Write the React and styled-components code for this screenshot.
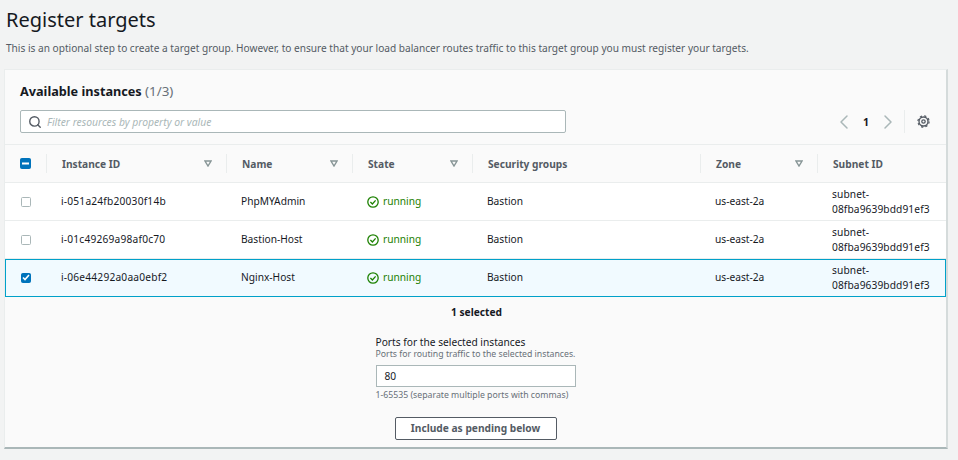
import React from "react";
import styled, { createGlobalStyle } from "styled-components";
import { Search, ChevronLeft, ChevronRight } from "lucide-react";

const GlobalStyle = createGlobalStyle`
  html, body {
    margin: 0;
    height: 460px;
    overflow: hidden;
    background: #f2f3f3;
    font-family: "Noto Sans", "Open Sans", sans-serif;
    color: #16191f;
  }
  * { box-sizing: border-box; }
`;

const COLUMNS = "41px 180px 126px 120px 228px 117px 1fr";

const Page = styled.div`
  width: 958px;
  height: 460px;
  padding: 6px 10px 0 4px;
`;

const Title = styled.h1`
  margin: 0 0 0 2px;
  font-size: 20px;
  line-height: 28px;
  font-weight: 400;
`;

const Intro = styled.p`
  margin: 7px 0 0 2px;
  font-size: 10.12px;
  line-height: 14px;
  color: #545b64;
  white-space: nowrap;
`;

const Card = styled.section`
  margin-top: 14px;
  height: 380px;
  background: #fafafa;
  border: 1px solid #eaeded;
  border-right: 2px solid #d5dbdb;
  border-bottom: 2px solid #aab7b8;
  display: flex;
  flex-direction: column;
`;

const CardHead = styled.div`
  height: 75px;
  padding: 11px 15px 0 15px;
  border-bottom: 1px solid #eaeded;
`;

const CardTitle = styled.h2`
  margin: 0;
  font-size: 12.7px;
  line-height: 20px;
  font-weight: 700;
  span {
    font-weight: 400;
    font-size: 13.4px;
    color: #687078;
  }
`;

const Toolbar = styled.div`
  margin-top: 9px;
  display: flex;
  align-items: center;
  justify-content: space-between;
`;

const FilterBox = styled.div`
  width: 546px;
  height: 23px;
  background: #fff;
  border: 1px solid #aab7b8;
  border-radius: 2px;
  display: flex;
  align-items: center;
  gap: 5px;
  padding-left: 7px;
  font-size: 10.35px;
  i {
    color: #aab7b8;
  }
`;

const Pager = styled.div`
  display: flex;
  align-items: center;
  height: 23px;
  margin-right: 1px;
  color: #aab7b8;
`;

const PageNumber = styled.span`
  width: 20px;
  text-align: center;
  color: #16191f;
  font-size: 10.5px;
  font-weight: 700;
`;

const PagerDivider = styled.span`
  width: 1px;
  height: 23px;
  background: #eaeded;
  margin: 0 12px 0 4px;
`;

const TableRow = styled.div`
  display: grid;
  grid-template-columns: ${COLUMNS};
  height: 38px;
  align-items: center;
  background: ${(p) => (p.$selected ? "#f1faff" : "#fff")};
  border-bottom: 1px solid #eaeded;
  font-size: 10.2px;
  color: #16191f;
  ${(p) => p.$selected && `
    border-bottom: none;
    padding-bottom: 1px;
    box-shadow: inset 0 0 0 1px #00a1c9;
  `}
`;

const HeadRow = styled(TableRow)`
  background: #fafafa;
  font-weight: 700;
  color: #545b64;
`;

const HeadCell = styled.div`
  height: 19px;
  display: flex;
  align-items: center;
  justify-content: space-between;
  padding: 0 14px 0 15px;
  border-left: 1px solid #eaeded;
`;

const Cell = styled.div`
  padding-left: 15px;
  line-height: 15px;
  letter-spacing: ${(p) => p.$spacing || 0}px;
`;

const BoxCell = styled.div`
  display: flex;
  padding-left: ${(p) => (p.$head ? 15 : 16)}px;
`;

const Check = styled.span`
  width: ${(p) => (p.$head ? 11 : 10)}px;
  height: ${(p) => (p.$head ? 11 : 10)}px;
  border-radius: 1.5px;
  display: flex;
  align-items: center;
  justify-content: center;
  background: ${(p) => (p.$on ? "#0073bb" : "#fff")};
  border: 1px solid ${(p) => (p.$on ? "#0073bb" : "#aab7b8")};
`;

const Status = styled.div`
  display: flex;
  align-items: center;
  gap: 4px;
  padding-left: 15px;
  color: #1d8102;
`;

const StatusText = styled.span`
  margin-top: -2px;
`;

const Selected = styled.div`
  margin: 8px 0 0 2px;
  text-align: center;
  font-size: 10.2px;
  line-height: 14px;
  font-weight: 700;
`;

const PortForm = styled.div`
  width: 200px;
  margin: 16px auto 0 auto;
`;

const PortLabel = styled.div`
  font-size: 10.2px;
  line-height: 14px;
  color: #16191f;
`;

const PortHint = styled.div`
  font-size: 8.72px;
  line-height: 11px;
  color: #687078;
  white-space: nowrap;
`;

const PortInput = styled.div`
  height: 22px;
  margin: 5px 0 3px;
  padding-left: 8px;
  background: #fff;
  border: 1px solid #aab7b8;
  font-size: 10.2px;
  line-height: 20px;
`;

const PendingButton = styled.div`
  width: 162px;
  height: 23px;
  margin: 16px auto 0 auto;
  border: 1px solid #545b64;
  border-radius: 2px;
  background: #fff;
  color: #545b64;
  font-size: 10.2px;
  line-height: 21px;
  font-weight: 700;
  text-align: center;
`;

const rows = [
  ["i-051a24fb20030f14b", "PhpMYAdmin"],
  ["i-01c49269a98af0c70", "Bastion-Host"],
  ["i-06e44292a0aa0ebf2", "Nginx-Host", true],
];

const headers = [
  ["Instance ID", true],
  ["Name", true],
  ["State", true],
  ["Security groups", false],
  ["Zone", true],
  ["Subnet ID", false],
];

function SortIcon() {
  return (
    <svg width="8" height="7" viewBox="0 0 8 7">
      <path d="M1 1h6L4 6z" fill="none" stroke="#879596" strokeWidth="1.4" />
    </svg>
  );
}

function RunningIcon() {
  return (
    <svg width="12" height="12" viewBox="0 0 12 12" fill="none" stroke="#1d8102" strokeWidth="1.3">
      <circle cx="6" cy="6" r="5.2" />
      <path d="M3.4 6l2 2 3.2-3.6" />
    </svg>
  );
}

function GearIcon() {
  return (
    <svg width="13" height="13" viewBox="0 0 13 13" fill="none" stroke="#545b64">
      <circle cx="6.5" cy="6.5" r="4.5" strokeWidth="1.4" />
      <circle cx="6.5" cy="6.5" r="5.6" strokeWidth="1.2" strokeDasharray="2.2 2.2" />
      <circle cx="6.5" cy="6.5" r="1.7" strokeWidth="1.3" />
    </svg>
  );
}

export default function App() {
  return (
    <Page>
      <GlobalStyle />
      <Title>Register targets</Title>
      <Intro>
        This is an optional step to create a target group. However, to ensure that your load balancer routes
        traffic to this target group you must register your targets.
      </Intro>
      <Card>
        <CardHead>
          <CardTitle>
            Available instances <span>(1/3)</span>
          </CardTitle>
          <Toolbar>
            <FilterBox>
              <Search size={14} color="#545b64" strokeWidth={2.4} />
              <i>Filter resources by property or value</i>
            </FilterBox>
            <Pager>
              <ChevronLeft size={24} strokeWidth={1.5} />
              <PageNumber>1</PageNumber>
              <ChevronRight size={24} strokeWidth={1.5} />
              <PagerDivider />
              <GearIcon />
            </Pager>
          </Toolbar>
        </CardHead>
        <HeadRow>
          <BoxCell $head>
            <Check $on $head>
              <svg width="7" height="3" viewBox="0 0 7 3">
                <rect width="7" height="2" y="0.5" fill="#fff" />
              </svg>
            </Check>
          </BoxCell>
          {headers.map(([label, sortable]) => (
            <HeadCell key={label}>
              {label}
              {sortable && <SortIcon />}
            </HeadCell>
          ))}
        </HeadRow>
        {rows.map(([id, name, selected]) => (
          <TableRow key={id} $selected={selected}>
            <BoxCell>
              <Check $on={selected}>
                {selected && (
                  <svg width="8" height="7" viewBox="0 0 8 7" fill="none" stroke="#fff" strokeWidth="1.6">
                    <path d="M1 3.5l2 2 4-4.5" />
                  </svg>
                )}
              </Check>
            </BoxCell>
            <Cell $spacing={0.2}>{id}</Cell>
            <Cell>{name}</Cell>
            <Status>
              <RunningIcon />
              <StatusText>running</StatusText>
            </Status>
            <Cell>Bastion</Cell>
            <Cell>us-east-2a</Cell>
            <Cell $spacing={0.1}>
              subnet-
              <br />
              08fba9639bdd91ef3
            </Cell>
          </TableRow>
        ))}
        <Selected>1 selected</Selected>
        <PortForm>
          <PortLabel>Ports for the selected instances</PortLabel>
          <PortHint>Ports for routing traffic to the selected instances.</PortHint>
          <PortInput>80</PortInput>
          <PortHint>1-65535 (separate multiple ports with commas)</PortHint>
          <PendingButton>Include as pending below</PendingButton>
        </PortForm>
      </Card>
    </Page>
  );
}
